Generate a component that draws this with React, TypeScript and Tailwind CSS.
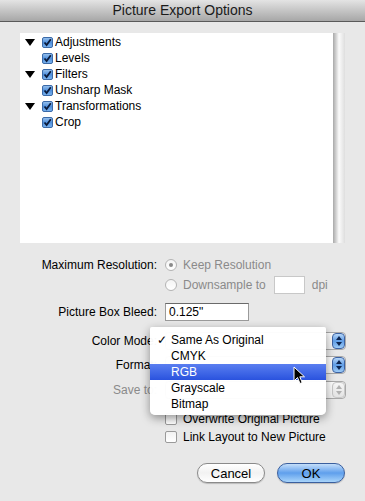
import React from "react";

const font = { fontFamily: '"Liberation Sans", Arial, sans-serif' };

function Tri() {
  return (
    <svg width="10" height="7" viewBox="0 0 10 7" className="block">
      <path d="M0 0 L10 0 L5 7 Z" fill="#000" />
    </svg>
  );
}

function BlueCheck() {
  return (
    <svg width="11" height="11" viewBox="0 0 11 11" className="block">
      <defs>
        <linearGradient id="bc" x1="0" y1="0" x2="0" y2="1">
          <stop offset="0" stopColor="#9cc4ee" />
          <stop offset="0.5" stopColor="#4f8fdc" />
          <stop offset="1" stopColor="#7cb4ee" />
        </linearGradient>
      </defs>
      <rect x="0.5" y="0.5" width="10" height="10" rx="1.5" fill="url(#bc)" stroke="#3b6aa8" />
      <path d="M2.5 5.5 L4.6 8 L8.8 2.2" fill="none" stroke="#0a1a3a" strokeWidth="1.8" />
    </svg>
  );
}

function Row({ tri, label }: { tri?: boolean; label: string }) {
  return (
    <div className="flex items-center h-[16px]">
      <div className="w-[22px] flex justify-start pl-[5px]">{tri ? <Tri /> : null}</div>
      <div className="w-[13px]">
        <BlueCheck />
      </div>
      <span className="text-[12px] text-black leading-none">{label}</span>
    </div>
  );
}

function Radio({ on }: { on?: boolean }) {
  return (
    <div className="w-[12px] h-[12px] rounded-full border border-[#b4b4b4] bg-gradient-to-b from-[#f4f4f4] to-[#ffffff] flex items-center justify-center">
      {on ? <div className="w-[4px] h-[4px] rounded-full bg-[#8a8a8a]" /> : null}
    </div>
  );
}

function Stepper({ disabled }: { disabled?: boolean }) {
  return (
    <div
      className={
        "w-[13px] h-[16px] rounded-[4px] border flex flex-col items-center justify-center gap-[2px] " +
        (disabled
          ? "border-[#c8c8c8] bg-gradient-to-b from-[#f6f6f6] to-[#e4e4e4]"
          : "border-[#3d63a4] bg-gradient-to-b from-[#b6d6f8] via-[#5f9de6] to-[#9ccaf6]")
      }
    >
      <svg width="6" height="4" viewBox="0 0 6 4" className="block">
        <path d="M0 4 L6 4 L3 0 Z" fill={disabled ? "#b0b0b0" : "#0d2550"} />
      </svg>
      <svg width="6" height="4" viewBox="0 0 6 4" className="block">
        <path d="M0 0 L6 0 L3 4 Z" fill={disabled ? "#b0b0b0" : "#0d2550"} />
      </svg>
    </div>
  );
}

function Popup({ disabled }: { disabled?: boolean }) {
  return (
    <div className="w-[181px] h-[18px] rounded-[4px] border border-[#a8a8a8] bg-gradient-to-b from-[#ffffff] to-[#f0f0f0] flex items-center justify-end pr-0">
      <Stepper disabled={disabled} />
    </div>
  );
}

function Check() {
  return <div className="w-[12px] h-[12px] rounded-[2px] border border-[#9a9a9a] bg-gradient-to-b from-[#f2f2f2] to-[#ffffff]" />;
}

function Label({ children, gray }: { children: React.ReactNode; gray?: boolean }) {
  return (
    <div className={"w-[157px] text-right text-[12px] leading-none " + (gray ? "text-[#8a8a8a]" : "text-black")}>
      {children}
    </div>
  );
}

export default function App() {
  return (
    <div className="relative w-[365px] h-[501px] bg-[#e8e8e8] overflow-hidden" style={font}>
      {/* title bar */}
      <div className="h-[22px] bg-gradient-to-b from-[#e4e4e4] to-[#a7a7a7] border-b border-[#5a5a5a] flex items-center justify-center">
        <span className="text-[14px] text-[#1a1a1a]">Picture Export Options</span>
      </div>

      {/* list */}
      <div className="ml-[20px] mt-[11px] flex h-[210px] w-[325px]">
        <div className="flex-1 bg-white pt-[1px] flex flex-col">
          <Row tri label="Adjustments" />
          <Row label="Levels" />
          <Row tri label="Filters" />
          <Row label="Unsharp Mask" />
          <Row tri label="Transformations" />
          <Row label="Crop" />
        </div>
        <div className="w-[12px] bg-gradient-to-r from-[#a9a9a9] via-[#fbfbfb] to-[#dedede]" />
      </div>

      {/* form */}
      <div className="mt-[12px] flex flex-col">
        <div className="flex items-center h-[20px] gap-[8px]">
          <Label>Maximum Resolution:</Label>
          <div className="flex items-center gap-[6px]">
            <Radio on />
            <span className="text-[12px] text-[#8a8a8a] leading-none">Keep Resolution</span>
          </div>
        </div>
        <div className="flex items-center h-[20px] gap-[8px]">
          <div className="w-[157px]" />
          <div className="flex items-center gap-[6px]">
            <Radio />
            <span className="text-[12px] text-[#8a8a8a] leading-none">Downsample to</span>
            <div className="ml-[2px] w-[31px] h-[18px] bg-white border border-[#c8c8c8]" />
            <span className="ml-[1px] text-[12px] text-[#8a8a8a] leading-none">dpi</span>
          </div>
        </div>
        <div className="flex items-center h-[20px] gap-[8px] mt-[7px]">
          <Label>Picture Box Bleed:</Label>
          <div className="w-[84px] h-[18px] bg-white border border-[#9a9a9a] border-t-[#6a6a6a] flex items-center pl-[3px]">
            <span className="text-[12px] text-black leading-none">0.125"</span>
          </div>
        </div>
        <div className="flex items-center h-[20px] gap-[8px] mt-[9px]">
          <Label>Color Mode:</Label>
          <Popup />
        </div>
        <div className="flex items-center h-[20px] gap-[8px] mt-[4px]">
          <Label>Format:</Label>
          <Popup />
        </div>
        <div className="flex items-center h-[20px] gap-[8px] mt-[5px]">
          <Label gray>Save to:</Label>
          <Popup disabled />
        </div>
        <div className="flex items-center h-[18px] gap-[8px] mt-[10px]">
          <div className="w-[157px]" />
          <div className="flex items-center gap-[6px]">
            <Check />
            <span className="text-[12px] text-black leading-none">Overwrite Original Picture</span>
          </div>
        </div>
        <div className="flex items-center h-[18px] gap-[8px]">
          <div className="w-[157px]" />
          <div className="flex items-center gap-[6px]">
            <Check />
            <span className="text-[12px] text-black leading-none">Link Layout to New Picture</span>
          </div>
        </div>
        <div className="flex justify-end gap-[12px] pr-[20px] mt-[17px]">
          <div className="w-[68px] h-[20px] rounded-full border border-[#8a8a8a] bg-gradient-to-b from-[#ffffff] via-[#f2f2f2] to-[#ffffff] shadow-[0_1px_1px_rgba(0,0,0,0.2)] flex items-center justify-center">
            <span className="text-[13px] text-black leading-none">Cancel</span>
          </div>
          <div className="w-[68px] h-[20px] rounded-full border border-[#3a5f9e] bg-gradient-to-b from-[#c4def9] via-[#5f9fec] to-[#a8d4fa] shadow-[0_1px_1px_rgba(0,0,0,0.2)] flex items-center justify-center">
            <span className="text-[13px] text-black leading-none">OK</span>
          </div>
        </div>
      </div>

      {/* menu overlay */}
      <div className="absolute left-[150px] top-[327px] w-[176px] h-[88px] bg-white/[0.97] rounded-b-[5px] rounded-t-[2px] shadow-[0_3px_10px_rgba(0,0,0,0.4)] flex flex-col pt-[5px]">
        {[
          { t: "Same As Original", c: true },
          { t: "CMYK" },
          { t: "RGB", h: true },
          { t: "Grayscale" },
          { t: "Bitmap" },
        ].map((it) => (
          <div
            key={it.t}
            className={
              "h-[16px] flex items-center " +
              (it.h ? "bg-gradient-to-b from-[#5a7ef0] to-[#2a52de] text-white" : "text-black")
            }
          >
            <div className="w-[21px] pl-[7px] text-[12px] leading-none">{it.c ? "✓" : ""}</div>
            <span className="text-[12px] leading-none">{it.t}</span>
          </div>
        ))}
      </div>

      {/* cursor */}
      <svg className="absolute left-[293px] top-[366px]" width="14" height="20" viewBox="0 0 14 20">
        <path d="M1 1 L1 15 L4.5 11.5 L7 17.5 L9.2 16.6 L6.8 10.8 L11.5 10.8 Z" fill="#000" stroke="#fff" strokeWidth="1" />
      </svg>
    </div>
  );
}
